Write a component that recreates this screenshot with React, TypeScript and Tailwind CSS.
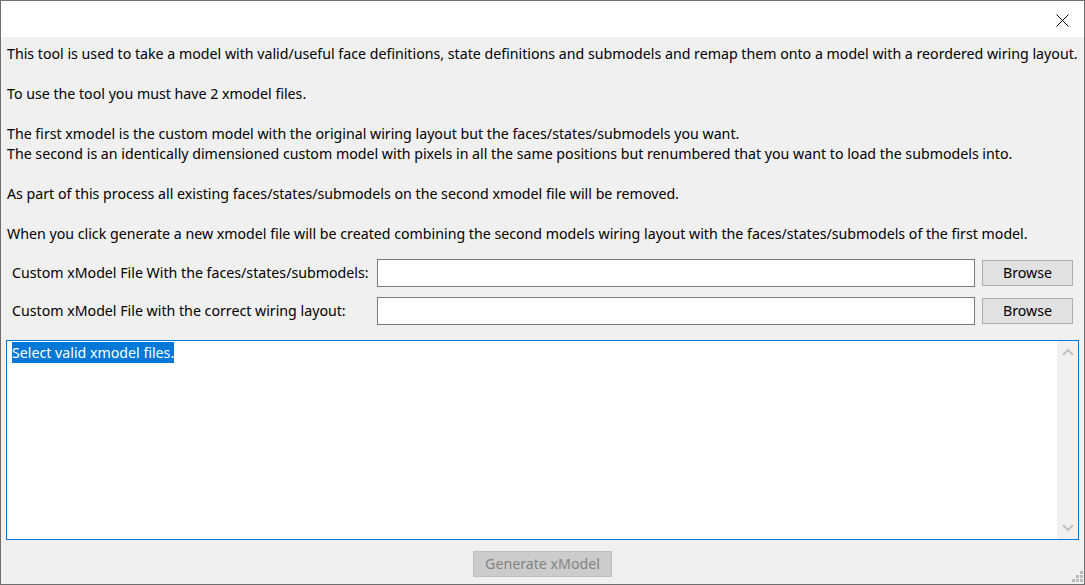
import React from "react";

const lines = [
  "This tool is used to take a model with valid/useful face definitions, state definitions and submodels and remap them onto a model with a reordered wiring layout.",
  "",
  "To use the tool you must have 2 xmodel files.",
  "",
  "The first xmodel is the custom model with the original wiring layout but the faces/states/submodels you want.",
  "The second is an identically dimensioned custom model with pixels in all the same positions but renumbered that you want to load the submodels into.",
  "",
  "As part of this process all existing faces/states/submodels on the second xmodel file will be removed.",
  "",
  "When you click generate a new xmodel file will be created combining the second models wiring layout with the faces/states/submodels of the first model.",
];

function FileRow({ label }: { label: string }) {
  return (
    <div className="flex items-center h-[28px] pl-[11px] pr-[11px]">
      <div className="w-[365px] whitespace-nowrap">{label}</div>
      <div className="flex-1 h-[28px] bg-white border border-[#7a7a7a]" />
      <button className="ml-[7px] w-[91px] h-[26px] bg-[#e1e1e1] border border-[#adadad] text-black">
        Browse
      </button>
    </div>
  );
}

export default function App() {
  return (
    <div
      className="w-[1085px] h-[585px] border border-[#6f6f6f] bg-[#f0f0f0] flex flex-col text-[14.2px] text-black overflow-hidden"
      style={{ fontFamily: '"Noto Sans", "Open Sans", sans-serif' }}
    >
      {/* title bar */}
      <div className="h-[36px] bg-white flex justify-end items-center shrink-0">
        <svg width="13" height="13" viewBox="0 0 13 13" className="mr-[15px] mt-[2px]">
          <path d="M0.5 0.5 L12.5 12.5 M12.5 0.5 L0.5 12.5" stroke="#000" strokeWidth="1" />
        </svg>
      </div>

      <div className="relative flex-1 flex flex-col">
        <div className="pl-[6px] pt-[7px] leading-[20px]">
          {lines.map((l, i) => (
            <div key={i} className="h-[20px] whitespace-nowrap">
              {l}
            </div>
          ))}
        </div>

        <div className="mt-[15px] flex flex-col gap-[10px]">
          <FileRow label="Custom xModel File With the faces/states/submodels:" />
          <FileRow label="Custom xModel File with the correct wiring layout:" />
        </div>

        <div className="mt-[15px] ml-[5px] mr-[5px] h-[200px] border border-[#0078d7] bg-white flex">
          <div className="flex-1 pl-[5px] pt-[1px]">
            <span className="bg-[#0078d7] text-white leading-[21px] inline-block">
              Select valid xmodel files.
            </span>
          </div>
          <div className="w-[21px] bg-[#f0f0f0] flex flex-col justify-between items-center py-[7px]">
            <svg width="12" height="8" viewBox="0 0 12 8">
              <path d="M1 7 L6 2 L11 7" stroke="#c2c2c2" strokeWidth="2" fill="none" />
            </svg>
            <svg width="12" height="8" viewBox="0 0 12 8">
              <path d="M1 1 L6 6 L11 1" stroke="#c2c2c2" strokeWidth="2" fill="none" />
            </svg>
          </div>
        </div>

        <div className="flex justify-center mt-[11px]">
          <button className="w-[139px] h-[26px] bg-[#cccccc] border border-[#bfbfbf] text-[#838383]">
            Generate xModel
          </button>
        </div>

        {/* size grip */}
        <svg width="12" height="12" viewBox="0 0 12 12" className="absolute right-[1px] bottom-[1px]">
          <g fill="#bcbcbc">
            <rect x="9" y="0" width="3" height="3" />
            <rect x="5" y="4" width="3" height="3" />
            <rect x="9" y="4" width="3" height="3" />
            <rect x="1" y="8" width="3" height="3" />
            <rect x="5" y="8" width="3" height="3" />
            <rect x="9" y="8" width="3" height="3" />
          </g>
        </svg>
      </div>
    </div>
  );
}
